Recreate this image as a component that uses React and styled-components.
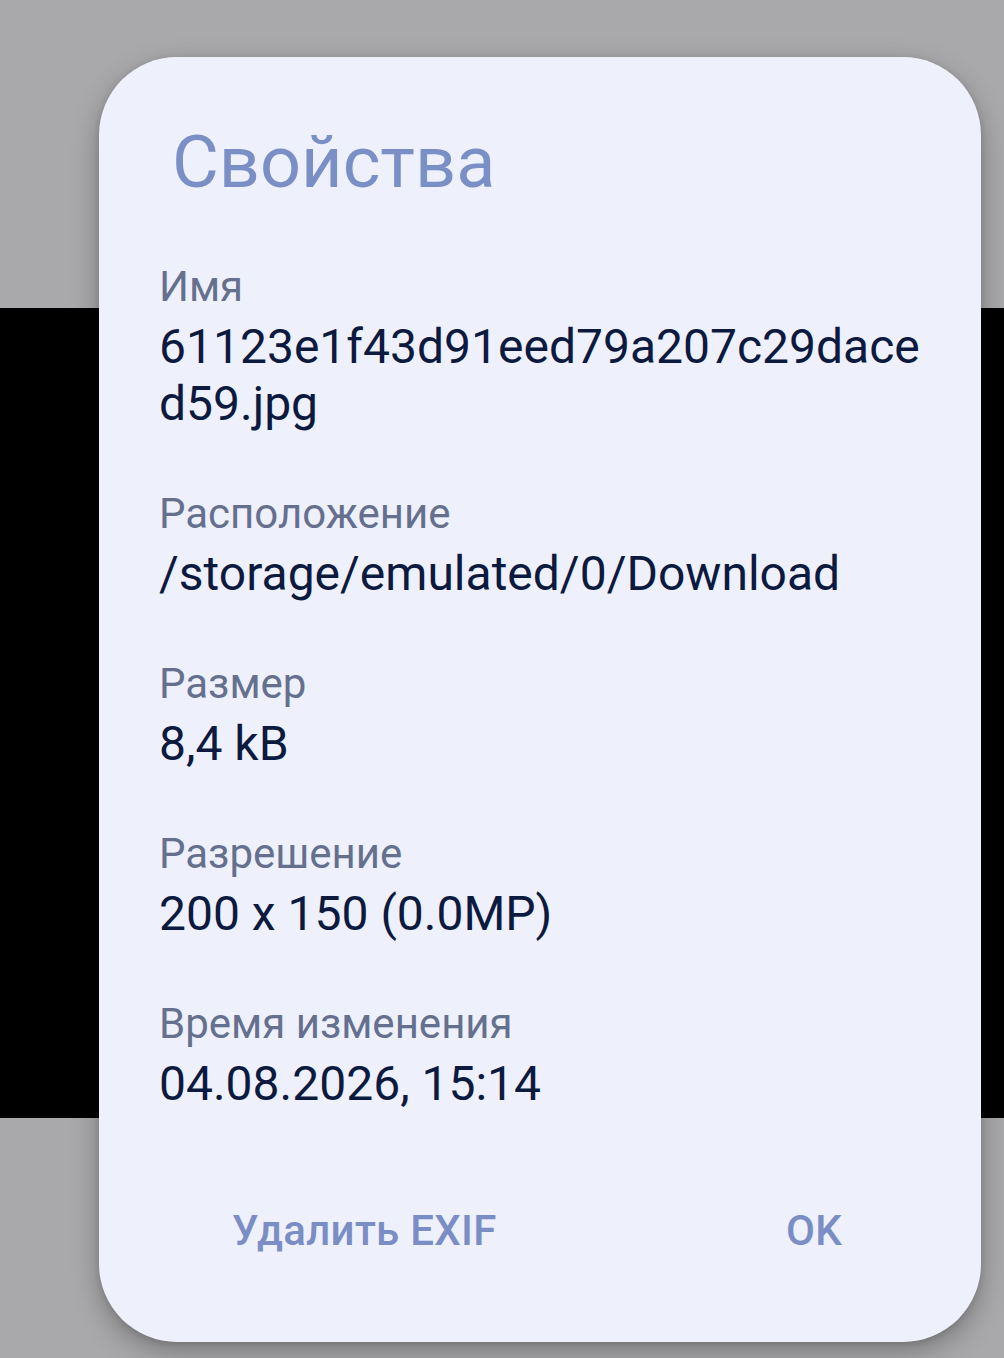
import React from 'react';
import styled, { createGlobalStyle } from 'styled-components';

const GlobalStyle = createGlobalStyle`
  html, body {
    margin: 0;
    padding: 0;
    background: #a9a8aa;
  }
  body {
    font-family: Roboto, "Noto Sans", "Liberation Sans", sans-serif;
  }
`;

const Screen = styled.div`
  position: relative;
  width: 1004px;
  height: 1358px;
  display: flex;
  flex-direction: column;
  overflow: hidden;
  background: #a9a8aa;
`;

const Band = styled.div`
  height: ${p => p.h}px;
  flex: ${p => (p.grow ? 1 : 'none')};
  background: ${p => p.color};
`;

const Dialog = styled.div`
  position: absolute;
  left: 99px;
  top: 57px;
  width: 882px;
  height: 1285px;
  box-sizing: border-box;
  padding: 64px 59px 0 60px;
  display: flex;
  flex-direction: column;
  background: #eef0fc;
  border-radius: 78px;
  box-shadow: 0 10px 28px rgba(0, 0, 0, 0.28), 0 2px 6px rgba(0, 0, 0, 0.12);
`;

const Title = styled.h2`
  margin: 0 0 57px 0;
  padding-left: 13px;
  font-size: 72px;
  line-height: 84px;
  font-weight: 400;
  color: #7a8fc6;
`;

const Field = styled.div`
  display: flex;
  flex-direction: column;
  gap: 6px;
  margin-bottom: 57px;
`;

const Label = styled.div`
  font-size: 42px;
  line-height: 50px;
  color: #65708e;
`;

const Value = styled.div`
  font-size: 48px;
  line-height: 57px;
  color: #0c1a3f;
`;

const Footer = styled.div`
  margin-top: auto;
  padding: 0 80px 86px 73px;
  display: flex;
  justify-content: space-between;
  align-items: center;
`;

const TextButton = styled.button`
  border: none;
  background: none;
  padding: 0;
  margin: 0;
  font-family: inherit;
  font-size: 42px;
  line-height: 50px;
  font-weight: 500;
  letter-spacing: 0.3px;
  color: #7a8dc4;
  cursor: pointer;
`;

const fields = [
  { label: 'Имя', lines: ['61123e1f43d91eed79a207c29dace', 'd59.jpg'] },
  { label: 'Расположение', lines: ['/storage/emulated/0/Download'] },
  { label: 'Размер', lines: ['8,4 kB'] },
  { label: 'Разрешение', lines: ['200 x 150 (0.0MP)'] },
  { label: 'Время изменения', lines: ['04.08.2026, 15:14'] },
];

export default function App() {
  return (
    <>
      <GlobalStyle />
      <Screen>
        <Band h={308} color="#a9a8aa" />
        <Band h={810} color="#000000" />
        <Band grow color="#a9a8aa" />
        <Dialog>
          <Title>Свойства</Title>
          {fields.map(f => (
            <Field key={f.label}>
              <Label>{f.label}</Label>
              <Value>
                {f.lines.map((l, i) => (
                  <div key={i}>{l}</div>
                ))}
              </Value>
            </Field>
          ))}
          <Footer>
            <TextButton>Удалить EXIF</TextButton>
            <TextButton>OK</TextButton>
          </Footer>
        </Dialog>
      </Screen>
    </>
  );
}
